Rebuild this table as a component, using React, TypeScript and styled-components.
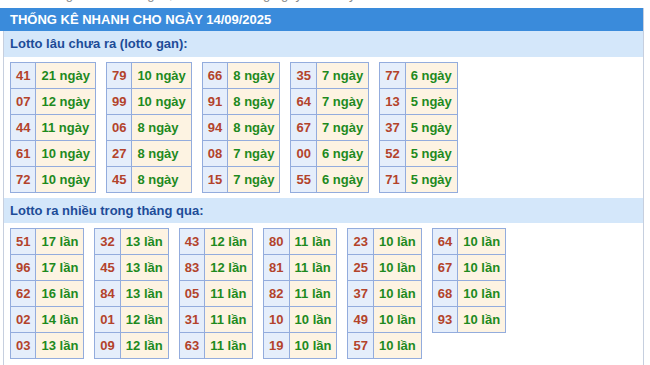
import styled, { createGlobalStyle } from 'styled-components'

const GlobalStyle = createGlobalStyle`
	body {
		margin: 0;
		background: #fff;
		font-family: 'Liberation Sans', Arial, sans-serif;
	}
`

type PairType = [string, number]

const ganData: PairType[][] = [
	[['41', 21], ['07', 12], ['44', 11], ['61', 10], ['72', 10]],
	[['79', 10], ['99', 10], ['06', 8], ['27', 8], ['45', 8]],
	[['66', 8], ['91', 8], ['94', 8], ['08', 7], ['15', 7]],
	[['35', 7], ['64', 7], ['67', 7], ['00', 6], ['55', 6]],
	[['77', 6], ['13', 5], ['37', 5], ['52', 5], ['71', 5]],
]

const hotData: PairType[][] = [
	[['51', 17], ['96', 17], ['62', 16], ['02', 14], ['03', 13]],
	[['32', 13], ['45', 13], ['84', 13], ['01', 12], ['09', 12]],
	[['43', 12], ['83', 12], ['05', 11], ['31', 11], ['63', 11]],
	[['80', 11], ['81', 11], ['82', 11], ['10', 10], ['19', 10]],
	[['23', 10], ['25', 10], ['37', 10], ['49', 10], ['57', 10]],
	[['64', 10], ['67', 10], ['68', 10], ['93', 10]],
]

const LottoTable = ({ rows, unit }: { rows: PairType[]; unit: string }) => (
	<Table>
		<tbody>
			{rows.map(([num, count]) => (
				<tr key={num}>
					<NumCell>{num}</NumCell>
					<CountCell>
						{count} {unit}
					</CountCell>
				</tr>
			))}
		</tbody>
	</Table>
)

const App = () => {
	return (
		<>
			<GlobalStyle />
			<CutLine>
				<span>Xem thống kê nhanh lô gan, lô ra nhiều trong ngày hôm nay</span>
			</CutLine>
			<Panel>
				<Header>THỐNG KÊ NHANH CHO NGÀY 14/09/2025</Header>
				<Body>
					<SubTitle $height={26}>Lotto lâu chưa ra (lotto gan):</SubTitle>
					<TableGroup>
						{ganData.map((rows, i) => (
							<LottoTable key={i} rows={rows} unit='ngày' />
						))}
					</TableGroup>
					<SubTitle $height={25}>Lotto ra nhiều trong tháng qua:</SubTitle>
					<TableGroup>
						{hotData.map((rows, i) => (
							<LottoTable key={i} rows={rows} unit='lần' />
						))}
					</TableGroup>
				</Body>
			</Panel>
		</>
	)
}

const CutLine = styled.div`
	height: 8px;
	overflow: hidden;
	padding-left: 10px;
	color: #888;
	font-size: 13px;
	& span {
		display: block;
		line-height: 15px;
		margin-top: -13px;
	}
`

const Panel = styled.div`
	width: 644px;
	box-sizing: border-box;
	border-right: 1px solid #c6cfdf;
`

const Header = styled.div`
	height: 23px;
	line-height: 23px;
	padding-left: 10px;
	background: #3a8bdb;
	color: #fff;
	font-size: 13px;
	font-weight: bold;
`

const Body = styled.div`
	margin-left: 3px;
	border-left: 1px solid #c6cfdf;
	padding-bottom: 10px;
`

const SubTitle = styled.div<{ $height: number }>`
	height: ${p => p.$height}px;
	line-height: ${p => p.$height}px;
	padding-left: 6px;
	background: #d4e7fa;
	color: #1d4c98;
	font-size: 13px;
	font-weight: bold;
`

const TableGroup = styled.div`
	display: flex;
	align-items: flex-start;
	gap: 10px;
	padding: 5px 0 5px 6px;
`

const Table = styled.table`
	border-collapse: collapse;
	font-size: 13px;
	font-weight: bold;
	& td {
		border: 1px solid #93acdd;
		height: 25px;
		line-height: 25px;
		padding: 0 5px;
		white-space: nowrap;
		box-sizing: border-box;
	}
`

const NumCell = styled.td`
	background: #e5eefb;
	color: #b3432b;
`

const CountCell = styled.td`
	background: #fdf3e2;
	color: #1e8a1e;
`

export default App
